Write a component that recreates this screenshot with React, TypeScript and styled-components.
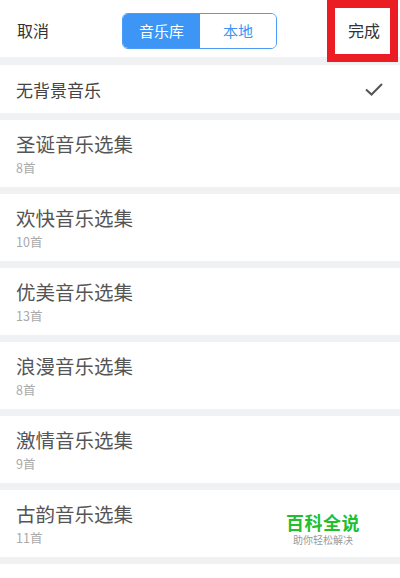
import React from "react"
import styled, { createGlobalStyle } from "styled-components"

const GlobalStyle = createGlobalStyle`
  html, body {
    margin: 0;
    padding: 0;
    background: #f0f1f3;
    font-family: "Noto Sans CJK SC", "Noto Sans", sans-serif;
  }
`

const Page = styled.div`
  width: 400px;
  height: 578px;
  overflow: hidden;
  position: relative;
  background: #f0f1f3;
`

const Header = styled.div`
  height: 57px;
  background: #fff;
  display: flex;
  align-items: center;
  padding-left: 17px;
  box-sizing: border-box;
  margin-bottom: 8px;
`

const HeaderText = styled.span<{ $gap?: number }>`
  font-size: 16px;
  color: #333;
  line-height: 1;
  margin-top: 2px;
  margin-left: ${(p) => p.$gap ?? 0}px;
`

const Segmented = styled.div`
  display: flex;
  width: 155px;
  height: 36px;
  border: 1px solid #4a9cf6;
  border-radius: 6px;
  overflow: hidden;
  box-sizing: border-box;
  margin-left: 73px;
  margin-top: 4px;
`

const Segment = styled.div<{ $active?: boolean }>`
  flex: ${(p) => (p.$active ? "0 0 77px" : "1")};
  display: flex;
  align-items: center;
  justify-content: center;
  font-size: 15px;
  background: ${(p) => (p.$active ? "#3d95f6" : "#fff")};
  color: ${(p) => (p.$active ? "#fff" : "#3d95f6")};
`

const List = styled.div`
  display: flex;
  flex-direction: column;
  gap: 7px;
`

const NoneRow = styled.div`
  height: 48px;
  background: #fff;
  display: flex;
  align-items: center;
  justify-content: space-between;
  padding: 0 16px 0 16px;
  font-size: 17px;
  color: #444;
`

const Row = styled.div`
  height: 67px;
  background: #fff;
  display: flex;
  flex-direction: column;
  justify-content: center;
  padding-left: 16px;
`

const Title = styled.div`
  font-size: 19.5px;
  color: #555;
  line-height: 24px;
`

const Count = styled.div`
  font-size: 12.5px;
  color: #aaa;
  line-height: 16px;
  margin-top: 4px;
`

const Highlight = styled.div`
  position: absolute;
  left: 327px;
  top: 0;
  width: 71px;
  height: 62px;
  border: 8px solid #ec1c24;
  box-sizing: border-box;
`

const Watermark = styled.div`
  position: absolute;
  left: 284px;
  top: 511px;
  width: 78px;
  display: flex;
  flex-direction: column;
  align-items: center;
`

const MarkTitle = styled.div`
  font-size: 18px;
  font-weight: 700;
  color: #1fbf2e;
  line-height: 22px;
  letter-spacing: 0.5px;
`

const MarkSub = styled.div`
  font-size: 10px;
  color: #999;
  line-height: 13px;
`

const albums = [
  { name: "圣诞音乐选集", count: 8 },
  { name: "欢快音乐选集", count: 10 },
  { name: "优美音乐选集", count: 13 },
  { name: "浪漫音乐选集", count: 8 },
  { name: "激情音乐选集", count: 9 },
  { name: "古韵音乐选集", count: 11 },
]

export default function App() {
  return (
    <Page>
      <GlobalStyle />
      <Header>
        <HeaderText>取消</HeaderText>
        <Segmented>
          <Segment $active>音乐库</Segment>
          <Segment>本地</Segment>
        </Segmented>
        <HeaderText $gap={71}>完成</HeaderText>
      </Header>
      <List>
        <NoneRow>
          无背景音乐
          <svg width="20" height="16" viewBox="0 0 20 16">
            <path d="M2 8.5 L7.5 13.5 L18 3" fill="none" stroke="#555" strokeWidth="2" />
          </svg>
        </NoneRow>
        {albums.map((a) => (
          <Row key={a.name}>
            <Title>{a.name}</Title>
            <Count>{a.count}首</Count>
          </Row>
        ))}
        <Row />
      </List>
      <Highlight />
      <Watermark>
        <MarkTitle>百科全说</MarkTitle>
        <MarkSub>助你轻松解决</MarkSub>
      </Watermark>
    </Page>
  )
}
